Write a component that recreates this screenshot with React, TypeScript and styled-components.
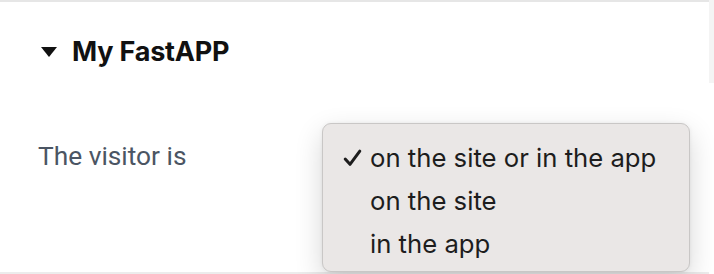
import React from "react";
import styled, { createGlobalStyle } from "styled-components";

const Global = createGlobalStyle`
  html, body { margin: 0; padding: 0; background: #ffffff; }
  body { width: 714px; height: 274px; overflow: hidden; }
`;

const Page = styled.div`
  display: flex;
  width: 714px;
  height: 274px;
  background: #ffffff;
`;

const Card = styled.section`
  position: relative;
  width: 709px;
  height: 270px;
  background: #ffffff;
  border-top: 2px solid #e6e6e6;
  border-bottom: 2px solid #ececec;
  display: flex;
  flex-direction: column;
`;

const Gutter = styled.div`
  width: 5px;
  height: 83px;
  background: #f4f4f4;
`;

const Header = styled.div`
  display: flex;
  align-items: center;
  gap: 15px;
  padding: 32px 0 0 41px;
  height: 36px;
`;

const Caret = styled.span`
  width: 0;
  height: 0;
  border-left: 8px solid transparent;
  border-right: 8px solid transparent;
  border-top: 10px solid #111111;
`;

const Title = styled.h2`
  margin: 0;
  font-family: Inter, "Liberation Sans", sans-serif;
  font-weight: 700;
  font-size: 27px;
  line-height: 36px;
  color: #111111;
  letter-spacing: -0.2px;
`;

const Row = styled.div`
  display: flex;
  align-items: center;
  padding: 71px 0 0 38px;
`;

const Label = styled.span`
  font-family: Roboto, "Liberation Sans", sans-serif;
  font-size: 26.3px;
  line-height: 30px;
  color: #4b5563;
`;

const Menu = styled.ul`
  position: absolute;
  left: 322px;
  top: 121px;
  width: 368px;
  height: 149px;
  margin: 0;
  padding: 12px 0 0 0;
  list-style: none;
  background: #eae7e6;
  border: 1px solid #c9c7c6;
  border-radius: 9px;
  box-shadow: 0 10px 28px rgba(0, 0, 0, 0.16), 0 0 4px rgba(0, 0, 0, 0.06);
  box-sizing: border-box;
  display: flex;
  flex-direction: column;
`;

const Item = styled.li`
  display: flex;
  align-items: center;
  height: 43px;
  line-height: 43px;
  font-family: Inter, "Liberation Sans", sans-serif;
  font-size: 25.7px;
  color: #1d1d1d;
`;

const Check = styled.span`
  width: 47px;
  display: flex;
  justify-content: flex-end;
  padding-right: 8px;
  box-sizing: border-box;
`;

const items = [
  { label: "on the site or in the app", checked: true },
  { label: "on the site", checked: false },
  { label: "in the app", checked: false },
];

export default function App() {
  return (
    <>
      <Global />
      <Page>
        <Card>
          <Header>
            <Caret />
            <Title>My FastAPP</Title>
          </Header>
          <Row>
            <Label>The visitor is</Label>
          </Row>
          <Menu>
            {items.map((it) => (
              <Item key={it.label}>
                <Check>
                  {it.checked && (
                    <svg width="19" height="18" viewBox="0 0 19 18">
                      <path d="M2.2 10 L7 15.3 L16.8 2.2" fill="none" stroke="#1d1d1d" strokeWidth="3" strokeLinecap="round" strokeLinejoin="round" />
                    </svg>
                  )}
                </Check>
                {it.label}
              </Item>
            ))}
          </Menu>
        </Card>
        <Gutter />
      </Page>
    </>
  );
}
